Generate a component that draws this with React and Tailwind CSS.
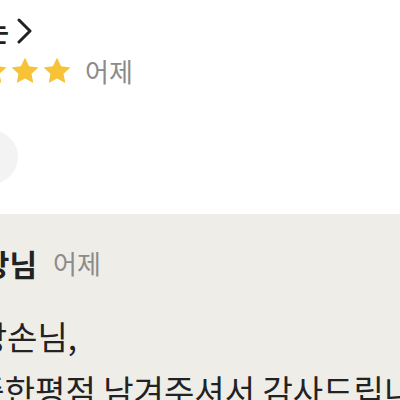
const font = { fontFamily: '"Noto Sans CJK KR", "Noto Sans", sans-serif' };

function Star() {
  return (
    <svg width="28" height="28" viewBox="0 0 24 24" className="shrink-0">
      <path
        d="M12 0.6l3.5 7.3 8 1-5.9 5.5 1.5 7.9L12 18.4l-7.1 3.9 1.5-7.9L.5 8.9l8-1z"
        fill="#f6c236"
      />
    </svg>
  );
}

// right-anchored box: content overflows off the left edge
function Clip({ width, children, className = "" }) {
  return (
    <div className={`flex shrink-0 justify-end ${className}`} style={{ width }}>
      <span className="shrink-0 whitespace-nowrap">{children}</span>
    </div>
  );
}

export default function App() {
  return (
    <div className="h-[400px] w-[400px] overflow-hidden bg-white" style={font}>
      <div className="flex h-[214px] flex-col bg-white">
        <div className="mt-[16px] flex h-[30px] items-center">
          <Clip width={9} className="text-[26px] font-bold leading-none text-[#222]">
            맛있는
          </Clip>
          <svg width="16" height="26" viewBox="0 0 16 26" className="ml-[8px]">
            <polyline
              points="2,2 13,13 2,24"
              fill="none"
              stroke="#222"
              strokeWidth="3"
              strokeLinecap="round"
              strokeLinejoin="round"
            />
          </svg>
        </div>
        <div className="mt-[10px] flex h-[30px] items-center">
          <div className="flex w-[71px] shrink-0 justify-end gap-[4px]">
            <Star />
            <Star />
            <Star />
            <Star />
            <Star />
          </div>
          <span className="ml-[14px] text-[26px] leading-none text-[#8b8b8b]">어제</span>
        </div>
        <div className="-ml-[36px] mt-[44px] h-[54px] w-[54px] rounded-full bg-[#f3f3f3]" />
      </div>
      <div className="flex h-[186px] flex-col bg-[#efede8]">
        <div className="mt-[34px] flex h-[34px] items-center">
          <Clip width={37} className="text-[30px] font-bold leading-none text-[#222]">
            사장님
          </Clip>
          <span className="ml-[16px] text-[26px] leading-none text-[#8b8b8b]">어제</span>
        </div>
        <div className="mt-[31px] text-[33px] leading-[54px] text-[#222]">
          <div className="flex">
            <Clip width={77}>사장손님,</Clip>
          </div>
          <div className="-ml-[56px] whitespace-nowrap">소중한평점 남겨주셔서 감사드립니다</div>
        </div>
      </div>
    </div>
  );
}
